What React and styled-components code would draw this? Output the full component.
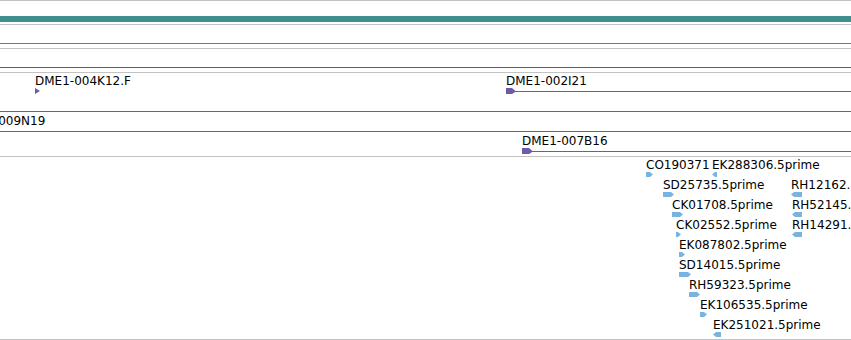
import styled, { createGlobalStyle } from 'styled-components';

const VIEW_WIDTH = 851;
const GRID_GRAY = '#c2c2c2';
const CLONE_PURPLE = '#6e5aa8';
const EST_BLUE = '#7ab4de';

const GlobalStyle = createGlobalStyle`
  html, body {
    margin: 0;
    padding: 0;
    background: #fff;
  }
  body {
    font-family: 'DejaVu Sans', 'Liberation Sans', sans-serif;
  }
`;

const Browser = styled.div`
  display: flex;
  flex-direction: column;
  width: ${VIEW_WIDTH}px;
  border-top: 1px solid ${GRID_GRAY};
  overflow: hidden;
`;

const Track = styled.div`
  position: relative;
  display: flex;
  flex-direction: column;
  height: ${(p) => p.$height}px;
  border-bottom: 1px solid ${GRID_GRAY};
  overflow: hidden;
`;

const RulerBar = styled.div`
  margin-top: 15px;
  height: 6px;
  background: #3f8f8f;
`;

const SignalLine = styled.div`
  margin-top: 18px;
  height: 1px;
  background: ${(p) => p.$color};
`;

const FeatureRow = styled.div`
  position: relative;
  flex: 0 0 20px;
`;

// x is the feature's genome position mapped to screen pixels
const Feature = styled.div`
  position: absolute;
  top: 0;
  left: ${(p) => p.$x}px;
  display: flex;
  flex-direction: column;
  align-items: flex-start;
  padding-top: 1px;
`;

const Label = styled.span`
  height: 14px;
  font-size: 12px;
  line-height: 14px;
  color: #000;
  white-space: nowrap;
`;

const GlyphSvg = styled.svg`
  display: block;
  margin-top: ${(p) => (p.$bare ? 14 : 0)}px;
  overflow: visible;
`;

const cloneRows = [
  [
    { x: 35, label: 'DME1-004K12.F', kind: 'tri' },
    { x: 506, label: 'DME1-002I21', kind: 'clone', w: 10 },
  ],
  [{ x: 0, kind: 'line' }],
  [{ x: -41, label: 'DME1-009N19', kind: 'line' }],
  [{ x: 522, label: 'DME1-007B16', kind: 'clone', w: 11 }],
];

const estRows = [
  [
    { x: 646, label: 'CO190371', dir: 1, w: 7 },
    { x: 712, label: 'EK288306.5prime', dir: -1, w: 5 },
  ],
  [
    { x: 663, label: 'SD25735.5prime', dir: 1, w: 11 },
    { x: 791, label: 'RH12162.5prime', dir: -1, w: 11 },
  ],
  [
    { x: 672, label: 'CK01708.5prime', dir: 1, w: 11 },
    { x: 792, label: 'RH52145.5prime', dir: -1, w: 10 },
  ],
  [
    { x: 676, label: 'CK02552.5prime', dir: 1, w: 5 },
    { x: 792, label: 'RH14291.5prime', dir: -1, w: 10 },
  ],
  [{ x: 679, label: 'EK087802.5prime', dir: 1, w: 6 }],
  [{ x: 679, label: 'SD14015.5prime', dir: 1, w: 12 }],
  [{ x: 689, label: 'RH59323.5prime', dir: 1, w: 11 }],
  [{ x: 700, label: 'EK106535.5prime', dir: 1, w: 7 }],
  [{ x: 713, label: 'EK251021.5prime', dir: -1, w: 8 }],
];

function CloneGlyph({ f }) {
  const tail = VIEW_WIDTH - f.x;
  const bare = !f.label;
  if (f.kind === 'tri') {
    return (
      <GlyphSvg width="6" height="6" $bare={bare}>
        <polygon points="0,0 5,3 0,6" fill={CLONE_PURPLE} />
      </GlyphSvg>
    );
  }
  if (f.kind === 'line') {
    return (
      <GlyphSvg width={tail} height="6" $bare={bare}>
        <rect x="0" y="3" width={tail} height="1" fill={CLONE_PURPLE} />
      </GlyphSvg>
    );
  }
  const w = f.w;
  return (
    <GlyphSvg width={tail} height="6" $bare={bare}>
      <rect x="0" y="3" width={tail} height="1" fill={CLONE_PURPLE} />
      <polygon
        points={`0,0 ${w - 4},0 ${w},3.5 ${w - 4},6 0,6`}
        fill={CLONE_PURPLE}
      />
    </GlyphSvg>
  );
}

function EstGlyph({ w, dir }) {
  const points =
    dir > 0
      ? `0,0 ${w - 3},0 ${w},2.5 ${w - 3},5 0,5`
      : `3,0 ${w},0 ${w},5 3,5 0,2.5`;
  return (
    <GlyphSvg width={w} height="5">
      <polygon points={points} fill={EST_BLUE} />
    </GlyphSvg>
  );
}

function App() {
  return (
    <>
      <GlobalStyle />
      <Browser>
        <Track $height={23}>
          <RulerBar />
        </Track>
        <Track $height={23}>
          <SignalLine $color="#2a91a8" />
        </Track>
        <Track $height={23}>
          <SignalLine $color="#3866ae" />
        </Track>
        <Track $height={83}>
          {cloneRows.map((row, i) => (
            <FeatureRow key={i}>
              {row.map((f, j) => (
                <Feature key={j} $x={f.x}>
                  {f.label && <Label>{f.label}</Label>}
                  <CloneGlyph f={f} />
                </Feature>
              ))}
            </FeatureRow>
          ))}
        </Track>
        <Track $height={182}>
          {estRows.map((row, i) => (
            <FeatureRow key={i}>
              {row.map((f) => (
                <Feature key={f.label} $x={f.x}>
                  <Label>{f.label}</Label>
                  <EstGlyph w={f.w} dir={f.dir} />
                </Feature>
              ))}
            </FeatureRow>
          ))}
        </Track>
      </Browser>
    </>
  );
}

export default App;
